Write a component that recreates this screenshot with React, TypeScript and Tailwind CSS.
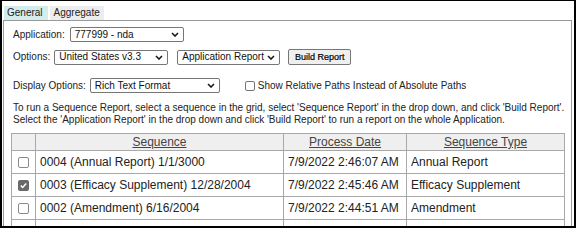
import React from "react";

const Chevron = () => (
  <svg width="8" height="5" viewBox="0 0 8 5" className="shrink-0">
    <path d="M1 1 L4 4 L7 1" fill="none" stroke="#1a1a1a" strokeWidth="1.6" />
  </svg>
);

function Select({ className, text }: { className: string; text: string }) {
  return (
    <div
      className={`flex h-[15px] items-center justify-between rounded-[2px] border border-[#767676] bg-white pl-[4px] pr-[4px] text-[10px] leading-none text-[#111] ${className}`}
    >
      <span className="whitespace-nowrap">{text}</span>
      <Chevron />
    </div>
  );
}

function Box({ checked }: { checked?: boolean }) {
  if (checked) {
    return (
      <span className="inline-flex h-[11px] w-[11px] items-center justify-center rounded-[2px] bg-[#6a6a6a]">
        <svg width="9" height="9" viewBox="0 0 9 9">
          <path d="M1.8 4.6 L3.7 6.5 L7.2 2.4" fill="none" stroke="#fff" strokeWidth="1.5" />
        </svg>
      </span>
    );
  }
  return <span className="inline-block h-[11px] w-[11px] rounded-[2px] border border-[#8a8a8a] bg-white" />;
}

const rows = [
  { seq: "0004 (Annual Report) 1/1/3000", date: "7/9/2022 2:46:07 AM", type: "Annual Report", checked: false },
  { seq: "0003 (Efficacy Supplement) 12/28/2004", date: "7/9/2022 2:45:46 AM", type: "Efficacy Supplement", checked: true },
  { seq: "0002 (Amendment) 6/16/2004", date: "7/9/2022 2:44:51 AM", type: "Amendment", checked: false },
  { seq: "0001 (Amendment) 3/1/2004", date: "7/9/2022 2:44:16 AM", type: "Amendment", checked: false },
];

export default function App() {
  return (
    <div
      className="h-[228px] w-[576px] overflow-hidden border-x-2 border-t border-b-2 border-black bg-white text-[#222]"
      style={{ fontFamily: '"Liberation Sans", Arial, sans-serif' }}
    >
      <div className="flex h-[19px] items-end gap-[2px] pl-[2px]">
        <div className="flex h-[14px] items-center bg-[#d5ecec] pl-[3px] pr-[5px] text-[10px] leading-none text-[#222]">General</div>
        <div className="flex h-[14px] items-center bg-[#ededed] px-[4px] text-[10px] leading-none text-[#222]">Aggregate</div>
      </div>
      <div className="ml-[1px] mr-[2px] h-[300px] border-x border-t border-[#9a9a9a] pl-[7px] pt-[6px]">
        <div className="flex flex-col pl-[2px] text-[10px] leading-none">
          <div className="flex items-center gap-[5px]">
            <span>Application:</span>
            <Select className="w-[114px]" text="777999 - nda" />
          </div>
          <div className="mt-[7px] flex items-center">
            <span>Options:</span>
            <Select className="ml-[4px] w-[114px]" text="United States v3.3" />
            <Select className="ml-[9px] w-[103px]" text="Application Report" />
            <div className="ml-[8px] flex h-[16px] w-[63px] items-center justify-center rounded-[2px] border border-[#767676] bg-[#efefef] text-[9px] text-black [-webkit-text-stroke:0.2px_#000]">
              Build Report
            </div>
          </div>
          <div className="mt-[13px] flex items-center">
            <span>Display Options:</span>
            <Select className="ml-[4px] w-[130px]" text="Rich Text Format" />
            <span className="ml-[25px] inline-block h-[10px] w-[10px] rounded-[2px] border border-[#767676] bg-white" />
            <span className="ml-[3px]">Show Relative Paths Instead of Absolute Paths</span>
          </div>
          <div className="mt-[9px] text-[10px] leading-[12px] text-[#222]">
            <div className="whitespace-nowrap">
              To run a Sequence Report, select a sequence in the grid, select 'Sequence Report' in the drop down, and click 'Build Report'.
            </div>
            <div className="whitespace-nowrap">
              Select the 'Application Report' in the drop down and click 'Build Report' to run a report on the whole Application.
            </div>
          </div>
        </div>
        <table className="mt-[7px] w-[553px] table-fixed border-collapse border border-[#a8a8a8] text-[12px] text-[#222]">
          <colgroup>
            <col className="w-[24px]" />
            <col className="w-[248px]" />
            <col className="w-[123px]" />
            <col className="w-[158px]" />
          </colgroup>
          <thead>
            <tr className="h-[17px] bg-[#efefef]">
              <th className="border border-[#a8a8a8] p-0" />
              <th className="border border-[#a8a8a8] p-0 text-center font-normal leading-none text-[#444] underline">Sequence</th>
              <th className="border border-[#a8a8a8] p-0 text-center font-normal leading-none text-[#444] underline">Process Date</th>
              <th className="border border-[#a8a8a8] p-0 text-center font-normal leading-none text-[#444] underline">Sequence Type</th>
            </tr>
          </thead>
          <tbody>
            {rows.map((r) => (
              <tr key={r.seq} className="h-[23px]">
                <td className="border border-[#a8a8a8] p-0 text-center align-middle">
                  <span className="flex items-center justify-center pt-[1px]">
                    <Box checked={r.checked} />
                  </span>
                </td>
                <td className="whitespace-nowrap border border-[#a8a8a8] py-0 pl-[4px] leading-none">{r.seq}</td>
                <td className="whitespace-nowrap border border-[#a8a8a8] py-0 pl-[4px] leading-none">{r.date}</td>
                <td className="whitespace-nowrap border border-[#a8a8a8] py-0 pl-[4px] leading-none">{r.type}</td>
              </tr>
            ))}
          </tbody>
        </table>
      </div>
    </div>
  );
}
